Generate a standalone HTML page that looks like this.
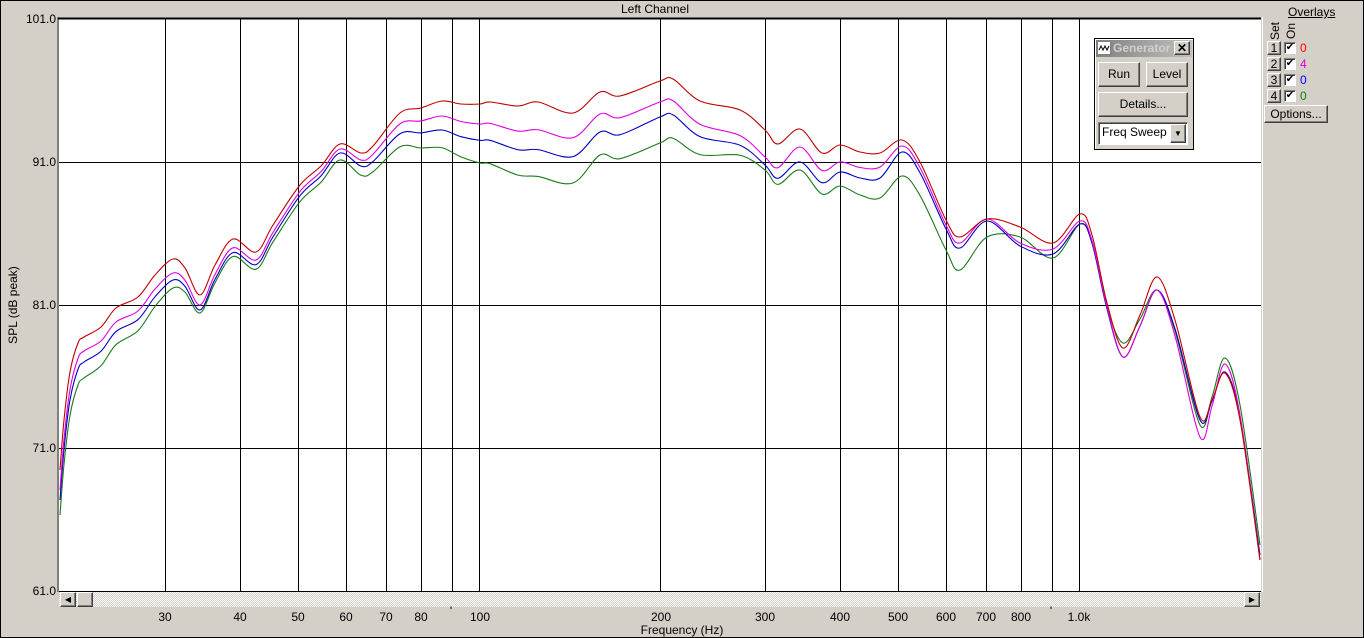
<!DOCTYPE html>
<html><head><meta charset="utf-8"><style>
*{margin:0;padding:0;box-sizing:border-box}
body{width:1364px;height:638px;overflow:hidden;background:#d4d0c8;font-family:"Liberation Sans",Arial,sans-serif;font-size:12px;color:#000;position:relative}
.a{position:absolute}
.frame{left:0;top:0;width:1364px;height:638px;border:1px solid #000}
.btn{position:absolute;background:#d4d0c8;border:1px solid;border-color:#fff #404040 #404040 #fff;box-shadow:inset -1px -1px 0 #808080;text-align:center;font-size:12px}
.yl{position:absolute;right:1308px;width:50px;text-align:right}
.xl{position:absolute;top:610px;width:40px;margin-left:-20px;text-align:center}
.cb{position:absolute;width:12px;height:12px;background:#fff;border:1px solid;border-color:#808080 #fff #fff #808080;box-shadow:inset 1px 1px 0 #404040;font-size:10px;line-height:10px;text-align:center;font-weight:bold;color:#000;font-family:"DejaVu Sans",sans-serif}
</style></head><body>
<div class="a frame"></div>
<div class="a" style="left:0;top:2px;width:1310px;text-align:center">Left Channel</div>
<div class="yl" style="top:12px">101.0</div>
<div class="yl" style="top:155px">91.0</div>
<div class="yl" style="top:298px">81.0</div>
<div class="yl" style="top:441px">71.0</div>
<div class="yl" style="top:584px">61.0</div>
<div class="a" style="left:-37px;top:298px;width:100px;text-align:center;transform:rotate(-90deg)">SPL (dB peak)</div>
<svg class="a" style="left:57px;top:17px" width="1206" height="576" viewBox="57 17 1206 576">
<rect x="59" y="19" width="1202" height="573" fill="#fff"/>
<line x1="58" y1="17" x2="58" y2="592" stroke="#808080" stroke-width="2"/>
<g stroke="#000" stroke-width="1" shape-rendering="crispEdges">
<line x1="58" y1="18.5" x2="1261" y2="18.5" stroke-width="2"/>
<line x1="59" y1="162.5" x2="1261" y2="162.5"/>
<line x1="59" y1="305.5" x2="1261" y2="305.5"/>
<line x1="59" y1="448.5" x2="1261" y2="448.5"/>
<g id="vl"></g>
</g>
<g id="curves" fill="none" stroke-width="1.1"></g>
</svg>
<div class="a" style="left:59px;top:591px;width:1202px;height:16px;background:repeating-conic-gradient(#fff 0 25%,#d4d0c8 0 50%) 0 0/2px 2px;border-top:1px solid #000"></div>
<div class="btn" style="left:60px;top:592px;width:16px;height:15px;font-size:8px;line-height:13px">◀</div>
<div class="btn" style="left:77px;top:592px;width:16px;height:15px"></div>
<div class="btn" style="left:1244px;top:592px;width:16px;height:15px;font-size:8px;line-height:13px">▶</div>
<div class="xl" style="left:165px">30</div>
<div class="xl" style="left:240px">40</div>
<div class="xl" style="left:298px">50</div>
<div class="xl" style="left:346px">60</div>
<div class="xl" style="left:386px">70</div>
<div class="xl" style="left:421px">80</div>
<div class="xl" style="left:451px;top:604px">'</div>
<div class="xl" style="left:480px">100</div>
<div class="xl" style="left:661px">200</div>
<div class="xl" style="left:765px">300</div>
<div class="xl" style="left:840px">400</div>
<div class="xl" style="left:898px">500</div>
<div class="xl" style="left:946px">600</div>
<div class="xl" style="left:986px">700</div>
<div class="xl" style="left:1021px">800</div>
<div class="xl" style="left:1051px;top:604px">'</div>
<div class="xl" style="left:1079px">1.0k</div>
<div class="a" style="left:602px;top:623px;width:160px;text-align:center">Frequency (Hz)</div>
<div class="a" style="left:1262px;top:17px;width:1px;height:575px;background:#fff"></div>
<div class="a" style="left:1288px;top:5px;text-decoration:underline">Overlays</div>
<div class="a" style="left:1262px;top:24px;width:26px;transform:rotate(-90deg);text-align:center">Set</div>
<div class="a" style="left:1278px;top:24px;width:26px;transform:rotate(-90deg);text-align:center">On</div>
<div class="btn" style="left:1267px;top:41px;width:14px;height:14px;line-height:12px">1</div>
<div class="btn" style="left:1267px;top:57px;width:14px;height:14px;line-height:12px">2</div>
<div class="btn" style="left:1267px;top:73px;width:14px;height:14px;line-height:12px">3</div>
<div class="btn" style="left:1267px;top:89px;width:14px;height:14px;line-height:12px">4</div>
<div class="cb" style="left:1284px;top:42px">✔</div>
<div class="cb" style="left:1284px;top:58px">✔</div>
<div class="cb" style="left:1284px;top:74px">✔</div>
<div class="cb" style="left:1284px;top:90px">✔</div>
<div class="a" style="left:1300px;top:41px;color:#f00">0</div>
<div class="a" style="left:1300px;top:57px;color:#e000e0">4</div>
<div class="a" style="left:1300px;top:73px;color:#00f">0</div>
<div class="a" style="left:1300px;top:89px;color:#080">0</div>
<div class="btn" style="left:1264px;top:105px;width:64px;height:18px;line-height:16px">Options...</div>
<div class="a" style="left:1094px;top:38px;width:100px;height:112px;background:#d4d0c8;border:1px solid #000;box-shadow:inset 1px 1px 0 #fff"></div>
<div class="a" style="left:1096px;top:40px;width:96px;height:17px;background:linear-gradient(90deg,#808080,#c0c0c0)"></div>
<svg class="a" style="left:1097px;top:41px" width="14" height="14"><rect x="0.5" y="0.5" width="13" height="13" fill="#fff" stroke="#808080"/><path d="M2,9 L4,5 L6,9 L8,5 L10,9 L12,5" stroke="#000" fill="none" stroke-width="1"/></svg>
<div class="a" style="left:1113px;top:41px;color:#d4d0c8;font-weight:bold">Generator</div>
<div class="btn" style="left:1174px;top:41px;width:16px;height:14px;line-height:12px;font-weight:bold">✕</div>
<div class="btn" style="left:1098px;top:62px;width:42px;height:25px;line-height:23px">Run</div>
<div class="btn" style="left:1146px;top:62px;width:42px;height:25px;line-height:23px">Level</div>
<div class="btn" style="left:1098px;top:92px;width:90px;height:25px;line-height:23px">Details...</div>
<div class="a" style="left:1098px;top:122px;width:90px;height:23px;background:#fff;border:1px solid;border-color:#808080 #fff #fff #808080;box-shadow:inset 1px 1px 0 #404040;padding:2px 0 0 3px">Freq Sweep</div>
<div class="btn" style="left:1170px;top:124px;width:16px;height:19px;font-size:8px;line-height:17px">▼</div>
<script>
const xs=[30,40,50,60,70,80,90,100,200,300,400,500,600,700,800,900,1000];
let vl='';for(const f of xs){const x=Math.round(479+600*Math.log10(f/100))+0.5;vl+=`<line x1="${x}" y1="19" x2="${x}" y2="592"/>`;}
document.getElementById('vl').innerHTML=vl;
const red=[[60,470],[64,420],[70,372],[78,343],[84,337],[101,327],[116,308],[138,297],[155,275],[173,259],[185,268],[200,295],[215,265],[233,239],[256,252],[273,225],[300,185],[321,166],[340,144],[361,153],[373,146],[400,113],[421,108],[442,101],[461,104],[480,104],[490,102],[518,106],[538,102],[573,113],[600,92],[620,96],[660,81],[673,79],[700,101],[740,110],[765,130],[778,144],[800,129],[822,153],[840,145],[860,152],[880,153],[902,140],[920,162],[946,220],[960,237],[987,219],[1020,227],[1053,243],[1080,214],[1092,235],[1107,303],[1123,348],[1140,315],[1157,277],[1175,320],[1200,417],[1212,400],[1225,373],[1240,420],[1260,560]];
const offs={
'#e000e0':[[60,20],[84,14],[173,14],[200,10],[340,5],[442,15],[540,28],[600,22],[660,21],[765,27],[800,18],[840,17],[880,14],[902,6],[946,5],[960,6],[987,0],[1020,16],[1053,6],[1080,7],[1107,4],[1123,9],[1157,13],[1200,20],[1225,-9],[1260,0]],
'#0000c0':[[60,30],[84,25],[173,21],[200,15],[340,9],[442,29],[540,48],[600,40],[660,36],[765,35],[800,33],[840,27],[880,25],[902,12],[946,9],[960,11],[987,2],[1020,19],[1053,11],[1080,10],[1107,6],[1123,9],[1157,13],[1200,3],[1225,-1],[1260,-5]],
'#1a7a1a':[[60,45],[84,41],[173,29],[200,18],[340,16],[421,40],[480,59],[540,75],[573,70],[600,63],[660,62],[765,40],[800,41],[840,41],[880,45],[902,36],[946,30],[960,33],[987,18],[1000,8],[1020,10],[1053,15],[1080,10],[1107,4],[1123,-5],[1157,13],[1200,8],[1225,-15],[1260,-15]]};
function interp(t,x){for(let i=0;i<t.length-1;i++){if(x<=t[i+1][0]){const r=(x-t[i][0])/(t[i+1][0]-t[i][0]);return t[i][1]+Math.max(0,r)*(t[i+1][1]-t[i][1]);}}return t[t.length-1][1];}
function path(p){let d=`M${p[0][0]},${p[0][1]}`;for(let i=0;i<p.length-1;i++){const p0=p[i-1]||p[i],p1=p[i],p2=p[i+1],p3=p[i+2]||p2;d+=` C${p1[0]+(p2[0]-p0[0])/6},${p1[1]+(p2[1]-p0[1])/6} ${p2[0]-(p3[0]-p1[0])/6},${p2[1]-(p3[1]-p1[1])/6} ${p2[0]},${p2[1]}`;}return d;}
let h='';
for(const c of ['#1a7a1a','#0000c0','#e000e0']){const p=red.map(([x,y])=>[x,y+interp(offs[c],x)]);h+=`<path d="${path(p)}" stroke="${c}"/>`;}
h+=`<path d="${path(red)}" stroke="#c00000"/>`;
document.getElementById('curves').innerHTML=h;
</script>
</body></html>
